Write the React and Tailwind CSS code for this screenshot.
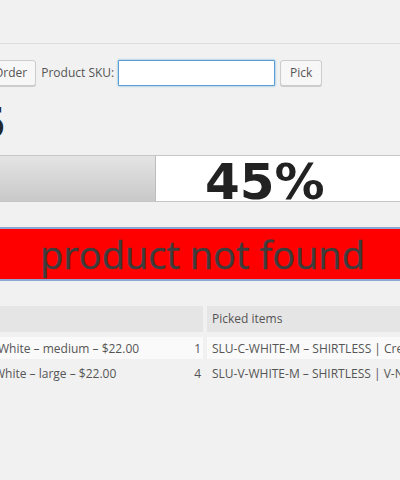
import React from 'react';

const rows = [
  { name: 'White – medium – $22.00', qty: 1, picked: 'SLU-C-WHITE-M – SHIRTLESS | Crew Neck – White – M', shade: true, shift: '-ml-[2px]' },
  { name: 'White – large – $22.00', qty: 4, picked: 'SLU-V-WHITE-M – SHIRTLESS | V-Neck – White – M', shade: false, shift: '-ml-[6px]' },
];

const App = () => {
  return (
    <div className="w-[400px] h-[480px] overflow-hidden bg-[#f1f1f1] text-[#555] font-['Open_Sans','Liberation_Sans',sans-serif]">
      {/* top spacer + rule */}
      <div className="h-[43px]" />
      <div className="border-t border-[#dcdcdc]" />

      {/* Picking toolbar */}
      <div className="mt-[16px] flex items-center h-[26px] text-[12px] whitespace-nowrap">
        <button className="-ml-[17px] h-[26px] pl-[10px] pr-[8px] bg-[#f7f7f7] border border-[#cccccc] rounded-[3px] text-[#555] shadow-[0_1px_0_#ccc]">
          Order
        </button>
        <span className="ml-[5px]">Product SKU:</span>
        <input
          type="text"
          className="ml-[4px] w-[157px] h-[26px] bg-white border border-[#5b9dd9] rounded-[1px] shadow-[0_0_2px_rgba(30,140,190,0.8)] outline-none px-1"
        />
        <button className="ml-[5px] h-[26px] w-[42px] bg-[#f7f7f7] border border-[#cccccc] rounded-[3px] text-[#555] shadow-[0_1px_0_#ccc]">
          Pick
        </button>
      </div>

      {/* Order heading (cut off at the left) */}
      <div className="mt-[15px] h-[42px] flex">
        <h1 className="-ml-[297px] w-[302px] shrink-0 text-right text-[43px] leading-[42px] font-bold text-[#23282d] whitespace-nowrap">
          Order #1235
        </h1>
      </div>

      {/* Progress bar */}
      <div className="mt-[12px] h-[47px] flex border-y border-[#c6c6c6]">
        <div className="-ml-[10px] w-[166px] shrink-0 bg-gradient-to-b from-[#e4e4e4] to-[#c9c9c9] border-r border-[#bdbdbd]" />
        <div className="flex-1 bg-white pl-[49px]">
          <span className="block h-[45px] leading-[53px] text-[50px] font-bold text-[#222] font-['DejaVu_Sans',sans-serif]">
            45%
          </span>
        </div>
      </div>

      {/* Status message */}
      <div className="mt-[25px] h-[54px] bg-[#ff0000] border-y-2 border-[#8ea6d4] pl-[40px]">
        <span className="block h-[50px] leading-[50px] text-[38px] text-[#3d3d3d] whitespace-nowrap [-webkit-text-stroke:0.4px_#3d3d3d]">
          product not found
        </span>
      </div>

      {/* Picked items table */}
      <div className="mt-[25px] text-[12px] whitespace-nowrap">
        <div className="flex h-[26px] leading-[26px]">
          <div className="w-[203px] shrink-0 bg-[#e5e5e5]" />
          <div className="ml-[4px] flex-1 bg-[#e5e5e5] pl-[5px]">Picked items</div>
        </div>
        {rows.map((row, i) => (
          <div key={i} className={`flex h-[22px] leading-[24px] ${i === 0 ? 'mt-[5px]' : 'mt-[3px]'}`}>
            <div className={`w-[203px] shrink-0 flex justify-between pr-[2px] overflow-hidden ${row.shade ? 'bg-[#fafafa]' : ''}`}>
              <span className={row.shift}>{row.name}</span>
              <span>{row.qty}</span>
            </div>
            <div className={`ml-[4px] flex-1 pl-[5px] overflow-hidden ${row.shade ? 'bg-[#fafafa]' : ''}`}>
              {row.picked}
            </div>
          </div>
        ))}
      </div>
    </div>
  );
};

export default App;
